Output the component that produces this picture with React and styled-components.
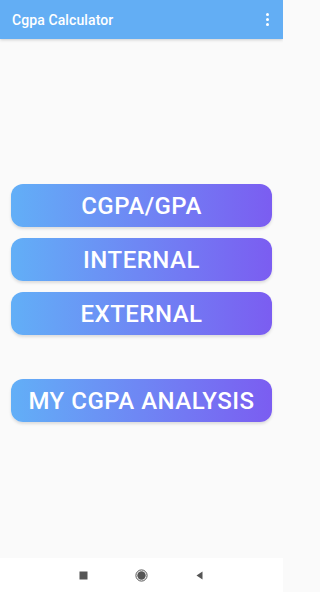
import React from "react";
import styled, { createGlobalStyle } from "styled-components";

const Global = createGlobalStyle`
  *, *::before, *::after { box-sizing: border-box; }
  html, body { margin: 0; padding: 0; background: #fafafa; }
  body { font-family: Roboto, "Noto Sans", sans-serif; }
`;

const Screen = styled.div`
  width: 283px;
  height: 592px;
  display: flex;
  flex-direction: column;
  background: #fafafa;
  overflow: hidden;
`;

const AppBar = styled.header`
  height: 39px;
  flex: none;
  background: #63aef4;
  display: flex;
  align-items: center;
  justify-content: space-between;
  padding: 0 12px;
  box-shadow: 0 1px 3px rgba(0, 0, 0, 0.18);
  position: relative;
  z-index: 1;
`;

const Title = styled.h1`
  margin: 0;
  font-size: 14px;
  font-weight: 500;
  color: #ffffff;
  letter-spacing: 0.1px;
`;

const MenuDots = styled.div`
  display: flex;
  flex-direction: column;
  gap: 2px;
  padding-right: 2px;
  span {
    width: 3px;
    height: 3px;
    border-radius: 50%;
    background: #fff;
  }
`;

const Content = styled.main`
  flex: 1;
  display: flex;
  flex-direction: column;
  padding: 145px 11px 0;
`;

const Group = styled.div`
  display: flex;
  flex-direction: column;
  gap: 11px;
`;

const Spacer = styled.div`
  height: ${(p) => p.h}px;
`;

const GradButton = styled.button`
  height: 43px;
  flex: none;
  border: none;
  border-radius: 12px;
  background: linear-gradient(90deg, #62aff7 0%, #7b5df1 100%);
  color: #ffffff;
  font-family: Roboto, "Noto Sans", sans-serif;
  font-size: 24px;
  font-weight: 500;
  letter-spacing: 0.5px;
  display: flex;
  align-items: center;
  justify-content: center;
  box-shadow: 0 2px 3px rgba(0, 0, 0, 0.12);
  padding: 0;
`;

const NavBar = styled.nav`
  height: 34px;
  flex: none;
  background: #ffffff;
  display: flex;
  align-items: center;
  justify-content: center;
  gap: 45px;
`;

const NavIcon = styled.svg`
  width: 13px;
  height: 13px;
  display: block;
`;

export default function App() {
  return (
    <>
      <Global />
      <Screen>
        <AppBar>
          <Title>Cgpa Calculator</Title>
          <MenuDots>
            <span />
            <span />
            <span />
          </MenuDots>
        </AppBar>
        <Content>
          <Group>
            <GradButton>CGPA/GPA</GradButton>
            <GradButton>INTERNAL</GradButton>
            <GradButton>EXTERNAL</GradButton>
          </Group>
          <Spacer h={44} />
          <GradButton>MY CGPA ANALYSIS</GradButton>
        </Content>
        <NavBar>
          <NavIcon viewBox="0 0 13 13">
            <rect x="2.5" y="2.5" width="8" height="8" fill="#555" />
          </NavIcon>
          <NavIcon viewBox="0 0 13 13">
            <circle cx="6.5" cy="6.5" r="5.6" fill="none" stroke="#555" strokeWidth="1" />
            <circle cx="6.5" cy="6.5" r="4.2" fill="#555" />
          </NavIcon>
          <NavIcon viewBox="0 0 13 13">
            <polygon points="9.5,2.5 9.5,10.5 3.5,6.5" fill="#555" />
          </NavIcon>
        </NavBar>
      </Screen>
    </>
  );
}
